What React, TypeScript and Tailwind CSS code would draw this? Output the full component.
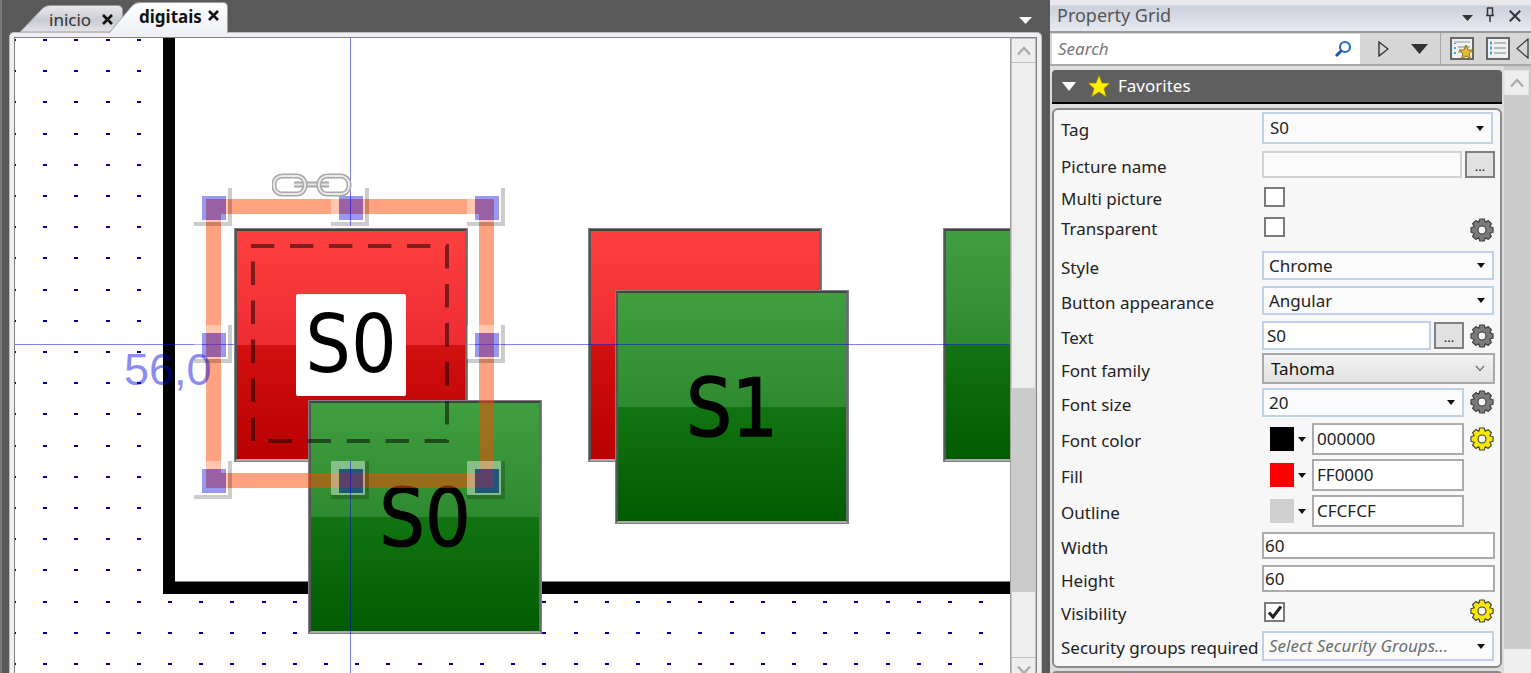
import React from "react";

const UI = "font-['Noto_Sans',sans-serif]";

function gearPath() {
  const teeth = 8;
  const pts: string[] = [];
  for (let i = 0; i < teeth; i++) {
    const a = (i * 2 * Math.PI) / teeth;
    const w = 0.2;
    const g = 0.27;
    const list: [number, number][] = [
      [8.4, a - g - 0.12],
      [11.3, a - w],
      [11.3, a + w],
      [8.4, a + g + 0.12],
    ];
    list.forEach(([r, t]) => {
      pts.push(`${(12 + r * Math.sin(t)).toFixed(2)} ${(12 - r * Math.cos(t)).toFixed(2)}`);
    });
  }
  return "M" + pts.join("L") + "Z";
}

function Gear({ yellow, className = "" }: { yellow?: boolean; className?: string }) {
  return (
    <svg width="24" height="24" viewBox="0 0 24 24" className={className}>
      <path d={gearPath()} fill={yellow ? "#f6e800" : "#7b7b7b"} stroke="#3c3c3c" strokeWidth="1.1" strokeLinejoin="round" />
      <circle cx="12" cy="12" r="4" fill={yellow ? "#f7f7f7" : "#f7f7f7"} stroke="#3c3c3c" strokeWidth="1.1" />
    </svg>
  );
}

function Caret({ className = "" }: { className?: string }) {
  return (
    <svg width="8" height="5" viewBox="0 0 8 5" className={className}>
      <path d="M0 0H8L4 5Z" fill="#111" />
    </svg>
  );
}

function Sel({ text, className = "", italic }: { text: string; className?: string; italic?: boolean }) {
  return (
    <div className={`flex h-full items-center justify-between border-2 border-[#bfd1e6] bg-[#fbfbfb] pr-[7px] ${className}`}>
      <span className={italic ? "pl-[5px] italic text-[#6e6e6e]" : "pl-[5px] text-[#222]"}>{text}</span>
      <Caret />
    </div>
  );
}

function Dots() {
  return (
    <button className="flex h-[27px] w-[30px] shrink-0 items-end justify-center border-2 border-[#808080] bg-[#e1e1e1] pb-[3px] text-[13px] leading-[13px] text-[#222]">
      ...
    </button>
  );
}

function Check({ on }: { on?: boolean }) {
  return (
    <div className="ml-[2px] flex h-[20px] w-[21px] shrink-0 items-center justify-center border-2 border-[#7a7a7a] bg-white">
      {on && (
        <svg width="16" height="14" viewBox="0 0 16 14">
          <path d="M2 7.5L6 12L14 1.5" fill="none" stroke="#222" strokeWidth="3" />
        </svg>
      )}
    </div>
  );
}

function Field({ text, className = "" }: { text: string; className?: string }) {
  return <div className={`flex items-center bg-white text-[#222] ${className}`}>{text}</div>;
}

function Row({ label, className, children }: { label: string; className: string; children?: React.ReactNode }) {
  return (
    <div className={`flex shrink-0 items-center ${className}`}>
      <span className="w-[205px] shrink-0 whitespace-nowrap pl-[4px] pt-[4px] text-[#222]">{label}</span>
      {children}
    </div>
  );
}

function ColorRow({ swatch, value }: { swatch: string; value: string }) {
  return (
    <div className="flex h-full w-[202px] items-center">
      <div className={`ml-[8px] h-[24px] w-[24px] ${swatch}`} />
      <Caret className="ml-[4px] mr-[6px]" />
      <Field text={value} className="h-full w-[152px] border-2 border-[#ababab] pl-[3px]" />
    </div>
  );
}

function Chevron({ up }: { up?: boolean }) {
  return (
    <svg width="16" height="10" viewBox="0 0 16 10">
      <path d={up ? "M2 8.5L8 2L14 8.5" : "M2 1.5L8 8L14 1.5"} fill="none" stroke="#ababab" strokeWidth="2.4" />
    </svg>
  );
}

function CanvasButton({ className, red, children }: { className: string; red?: boolean; children?: React.ReactNode }) {
  return (
    <div className={`absolute h-[234px] w-[234px] border border-[#808080] ${className}`}>
      <div
        className={`flex h-full w-full items-center justify-center border-2 border-t-[#444444] border-r-[#6b6b6b] border-b-[#ababab] border-l-[#555555] ${
          red
            ? "bg-[linear-gradient(#ff4040_0%,#ec2c31_50%,#d21010_50%,#b80000_100%)]"
            : "bg-[linear-gradient(#409f40_0%,#2e8a30_50%,#127412_50%,#005c00_100%)]"
        }`}
      >
        {children}
      </div>
    </div>
  );
}

const BTN_TEXT = "font-['DejaVu_Sans_Condensed','DejaVu_Sans',sans-serif] text-[80px] leading-none text-black";

function Handle({ className }: { className: string }) {
  return (
    <div className={`absolute h-[38px] w-[38px] border-r-4 border-b-4 border-black/20 ${className}`}>
      <div className="h-[34px] w-[34px] border-t-8 border-r-2 border-b-2 border-l-8 border-white/40">
        <div className="h-[24px] w-[24px] bg-[#0000dd]/40" />
      </div>
    </div>
  );
}

function DotGrid() {
  const xs = Array.from({ length: 33 }, (_, i) => Math.round(-1 + 31.2 * i));
  const ys = Array.from({ length: 21 }, (_, i) => Math.round(1 + 31.2 * i));
  return (
    <svg width="995" height="635" className="absolute left-0 top-0" shapeRendering="crispEdges">
      {ys.map((y) => xs.map((x) => <rect key={`${x}-${y}`} x={x - 2} y={y} width="4" height="2" fill="#00009c" />))}
    </svg>
  );
}

function Canvas() {
  return (
    <div className="relative h-full w-[995px] shrink-0 overflow-hidden bg-white">
      <DotGrid />
      <div className="absolute left-[148px] top-0 h-[556px] w-[847px] border-b-[12px] border-l-[12px] border-black bg-white shadow-[inset_0_-1px_0_#808080]" />

      <CanvasButton red className="left-[573px] top-[190px]" />
      <CanvasButton className="left-[928px] top-[190px]" />
      <CanvasButton className="left-[600px] top-[252px]">
        <span className={`${BTN_TEXT} mt-[4px] [-webkit-text-stroke:1.5px_black]`}>S1</span>
      </CanvasButton>

      <div className="absolute left-0 top-[306px] h-px w-[220px] bg-[#0000dd]/50" />
      <div className="absolute left-[452px] top-[306px] h-px w-[543px] bg-[#0000dd]/50" />

      <CanvasButton red className="left-[219px] top-[190px]">
        <div className="flex h-[102px] w-[110px] items-center justify-center rounded-[2px] bg-white">
          <span className={BTN_TEXT}>S0</span>
        </div>
      </CanvasButton>
      <CanvasButton className="left-[293px] top-[362px]">
        <span className={`${BTN_TEXT} mt-[4px] [-webkit-text-stroke:1px_black]`}>S0</span>
      </CanvasButton>

      <svg width="220" height="220" className="absolute left-[228px] top-[200px]">
        <path
          d="M8 8H204V203H10V8"
          fill="none"
          stroke="#000"
          strokeOpacity="0.5"
          strokeWidth="4"
          strokeDasharray="23.4 15.6"
        />
      </svg>

      <div className="absolute left-[191px] top-[161px] h-[289px] w-[288px] border-[15px] border-[#ff4500]/50" />

      <Handle className="left-[179px] top-[150px]" />
      <Handle className="left-[316px] top-[150px]" />
      <Handle className="left-[452px] top-[150px]" />
      <Handle className="left-[179px] top-[287px]" />
      <Handle className="left-[452px] top-[287px]" />
      <Handle className="left-[179px] top-[423px]" />
      <Handle className="left-[316px] top-[423px]" />
      <Handle className="left-[452px] top-[423px]" />

      <div className="absolute left-[335px] top-0 h-[188px] w-px bg-[#0000dd]/50" />
      <div className="absolute left-[335px] top-[423px] h-[212px] w-px bg-[#0000dd]/50" />

      <svg width="80" height="26" viewBox="0 0 80 26" className="absolute left-[257px] top-[135px]">
        <g fill="none" strokeLinejoin="round">
          <path d="M22 11.5H57" stroke="#a8a8a8" strokeWidth="6" />
          <path d="M22 11.5H57" stroke="#e6e6e6" strokeWidth="2" />
          <rect x="2" y="3" width="31" height="18" rx="8" stroke="#a8a8a8" strokeWidth="5" />
          <rect x="2" y="3" width="31" height="18" rx="8" stroke="#ebebeb" strokeWidth="2" />
          <rect x="47" y="3" width="30" height="18" rx="8" stroke="#a8a8a8" strokeWidth="5" />
          <rect x="47" y="3" width="30" height="18" rx="8" stroke="#ebebeb" strokeWidth="2" />
        </g>
      </svg>

      <span className="absolute left-[109px] top-[309px] font-['Liberation_Sans',sans-serif] text-[45px] leading-none text-[#0000dd]/45">
        56,0
      </span>
    </div>
  );
}

function DocScrollbar() {
  return (
    <div className="flex h-full w-[26px] shrink-0 flex-col border-l border-[#a0a0a0] bg-[#eeeeee]">
      <div className="ml-[0px] flex h-[25px] w-[25px] shrink-0 items-center justify-center border border-[#bdbdbd] bg-[#eeeeee]">
        <Chevron up />
      </div>
      <div className="h-[325px] w-[25px] shrink-0 border-x border-[#c4c4c4]" />
      <div className="h-[204px] w-[25px] shrink-0 bg-[#cbcbcb]" />
      <div className="h-[65px] w-[25px] shrink-0 border-x border-[#c4c4c4]" />
      <div className="flex h-[25px] w-[25px] shrink-0 items-center justify-center border border-[#bdbdbd] bg-[#eeeeee]">
        <Chevron />
      </div>
    </div>
  );
}

function CloseX({ className = "" }: { className?: string }) {
  return (
    <svg width="11" height="11" viewBox="0 0 11 11" className={className}>
      <path d="M1 1L10 10M10 1L1 10" stroke="#111" strokeWidth="2.6" />
    </svg>
  );
}

function Tabs() {
  return (
    <div className="relative flex h-[32px] shrink-0 items-end pl-[18px]">
      <div className="relative h-[27px] w-[103px] shrink-0">
        <svg width="103" height="27" viewBox="0 0 103 27" className="absolute inset-0">
          <defs>
            <linearGradient id="tabA" x1="0" y1="0" x2="0" y2="1">
              <stop offset="0" stopColor="#e9e9ec" />
              <stop offset="0.55" stopColor="#c9cbd2" />
              <stop offset="1" stopColor="#e4e5ea" />
            </linearGradient>
          </defs>
          <path d="M0 27L23 3Q26 .5 30 .5H97Q102.500 .5 102.500 5V15L91 27Z" fill="url(#tabA)" stroke="#9a9a9a" />
        </svg>
        <div className={`relative flex h-full items-center pl-[29px] pt-[2px] text-[17px] text-[#333] ${UI}`}>
          inicio
          <CloseX className="ml-[11px]" />
        </div>
      </div>
      <div className="relative z-10 -ml-[14px] -mb-px h-[32px] w-[120px] shrink-0">
        <svg width="120" height="32" viewBox="0 0 120 32" className="absolute inset-0">
          <defs>
            <linearGradient id="tabB" x1="0" y1="0" x2="0" y2="1">
              <stop offset="0" stopColor="#ffffff" />
              <stop offset="1" stopColor="#eff0f5" />
            </linearGradient>
          </defs>
          <path d="M0 32L23 5Q26 1.500 31 1.500H114Q118.500 1.500 118.500 6V32Z" fill="url(#tabB)" />
          <path d="M0 32L23 5Q26 1.500 31 1.500H114Q118.500 1.500 118.500 6V32" fill="none" stroke="#9f9f9f" />
        </svg>
        <div className={`relative flex h-full items-center pb-[1px] pl-[30px] text-[17px] font-bold text-[#111] ${UI}`}>
          digitais
          <CloseX className="mb-[3px] ml-[6px]" />
        </div>
      </div>
      <svg width="13" height="7" viewBox="0 0 13 7" className="mb-[8px] ml-auto mr-[18px]">
        <path d="M0 0H13L6.500 7Z" fill="#fff" />
      </svg>
    </div>
  );
}

function TitleBar() {
  return (
    <div className="flex h-[33px] shrink-0 items-center border-b-2 border-[#9a9a9a] bg-[linear-gradient(#e9e9eb_0%,#e6e6e9_15%,#ccd0dc_20%,#e6e9f1_100%)] pl-[7px] pr-[10px]">
      <span className={`text-[18px] text-[#555] ${UI}`}>Property Grid</span>
      <svg width="11" height="6" viewBox="0 0 11 6" className="ml-auto mt-[4px]">
        <path d="M0 0H11L5.500 6Z" fill="#333" />
      </svg>
      <svg width="10" height="15" viewBox="0 0 10 15" className="ml-[12px] mb-[2px]">
        <path d="M1 8.500H9M2.500 8V1H7.500V8M5 9V15M2.500 1H7.500" fill="none" stroke="#333" strokeWidth="1.500" />
      </svg>
      <svg width="12" height="12" viewBox="0 0 12 12" className="ml-[14px]">
        <path d="M.8 .8L11.200 11.200M11.200 .8L.8 11.200" stroke="#333" strokeWidth="2" />
      </svg>
    </div>
  );
}

function Toolbar() {
  return (
    <div className="flex h-[33px] shrink-0 items-center border-b-2 border-[#a8a8a8] bg-[#d6d6d6] pl-[2px]">
      <div className="flex h-[30px] w-[308px] shrink-0 items-center justify-between bg-white pl-[6px] pr-[8px]">
        <span className={`text-[17px] italic text-[#777] ${UI}`}>Search</span>
        <svg width="18" height="18" viewBox="0 0 18 18">
          <circle cx="11" cy="7" r="5" fill="none" stroke="#2a6fc0" strokeWidth="2.200" />
          <path d="M7.500 10.500L2 16" stroke="#1f5aa8" strokeWidth="3" />
        </svg>
      </div>
      <svg width="11" height="16" viewBox="0 0 11 16" className="ml-[18px]">
        <path d="M1 1L10 8L1 15Z" fill="none" stroke="#333" strokeWidth="1.400" />
      </svg>
      <svg width="17" height="10" viewBox="0 0 17 10" className="ml-[22px]">
        <path d="M0 0H17L8.500 10Z" fill="#333" />
      </svg>
      <div className="ml-[12px] h-full w-px bg-[#a8a8a8]" />
      <svg width="24" height="24" viewBox="0 0 24 24" className="ml-[9px]">
        <rect x="1" y="1" width="22" height="21" fill="#eef0f2" stroke="#666" strokeWidth="2" />
        <path d="M4 5H20" stroke="#c4c4c4" strokeWidth="2" />
        <path d="M4 6V7H6V6ZM4 10V12H6V10ZM4 15V17H6V15Z" fill="#3fa6e8" />
        <path d="M8 10H20M8 15H12" stroke="#bbb" strokeWidth="2" />
        <path d="M16 8L18.200 13H23L19.200 16.500L20.500 22L16 19L11.500 22L12.800 16.500L9 13H13.800Z" fill="#e2bc2f" stroke="#8a6f22" />
      </svg>
      <svg width="24" height="24" viewBox="0 0 24 24" className="ml-[12px]">
        <rect x="1" y="1" width="22" height="21" fill="#eef0f2" stroke="#666" strokeWidth="2" />
        <path d="M4 6H6M4 11H6M4 16H6" stroke="#3fa6e8" strokeWidth="3" />
        <path d="M8 6H20M8 11H20M8 16H20" stroke="#bbb" strokeWidth="2" />
      </svg>
      <svg width="13" height="21" viewBox="0 0 13 21" className="ml-[6px]">
        <path d="M12 1L1 10.500L12 20Z" fill="none" stroke="#333" strokeWidth="1.200" />
      </svg>
    </div>
  );
}

function Favorites() {
  return (
    <div className={`flex h-full w-[454px] shrink-0 flex-col pl-[2px] pr-[2px] pt-[4px] text-[17px] ${UI}`}>
      <div className="flex h-[34px] shrink-0 items-center rounded-t-[4px] border-b-2 border-black bg-[#5f5f5f] pl-[10px] text-white">
        <svg width="14" height="9" viewBox="0 0 14 9">
          <path d="M0 0H14L7 9Z" fill="#fff" />
        </svg>
        <svg width="24" height="24" viewBox="0 0 24 24" className="ml-[11px]">
          <path d="M12 1L15 9H23L17 14.500L19.500 23L12 18L4.500 23L7 14.500L1 9H9Z" fill="#ffee00" stroke="#8c7d10" strokeWidth=".8" />
        </svg>
        <span className="ml-[7px]">Favorites</span>
      </div>
      <div className="mt-[4px] flex h-[560px] shrink-0 flex-col rounded-[6px] border-2 border-[#8a8a8a] bg-[#f7f7f7] pl-[3px] pr-[5px]">
        <Row label="Tag" className="mt-[2px] h-[32px]">
          <Sel text="S0" className="w-[231px] [&>span]:pl-[6px]" />
        </Row>
        <Row label="Picture name" className="mt-[7px] h-[27px]">
          <div className="h-full w-[202px] border-2 border-[#d2d2d2] bg-[#fafafa]" />
          <div className="ml-[3px]">
            <Dots />
          </div>
        </Row>
        <Row label="Multi picture" className="mt-[9px] h-[20px]">
          <Check />
        </Row>
        <Row label="Transparent" className="mt-[10px] h-[20px]">
          <Check />
          <Gear className="ml-[185px] mt-[6px]" />
        </Row>
        <Row label="Style" className="mt-[14px] h-[29px]">
          <Sel text="Chrome" className="w-[232px]" />
        </Row>
        <Row label="Button appearance" className="mt-[6px] h-[29px]">
          <Sel text="Angular" className="w-[232px]" />
        </Row>
        <Row label="Text" className="mt-[6px] h-[29px]">
          <Field text="S0" className="h-full w-[169px] border-2 border-[#bfd1e6] pl-[3px]" />
          <div className="ml-[3px]">
            <Dots />
          </div>
          <Gear className="ml-[6px]" />
        </Row>
        <Row label="Font family" className="mt-[3px] h-[31px]">
          <div className="flex h-full w-[235px] items-center justify-between border-2 border-[#a9a9a9] bg-[linear-gradient(#f3f3f3,#e1e1e1)] pl-[7px] pr-[8px] text-[#111]">
            <span>Tahoma</span>
            <svg width="10" height="7" viewBox="0 0 10 7">
              <path d="M1 1L5 5.500L9 1" fill="none" stroke="#777" strokeWidth="1.400" />
            </svg>
          </div>
        </Row>
        <Row label="Font size" className="mt-[4px] h-[29px]">
          <Sel text="20" className="w-[202px]" />
          <Gear className="ml-[6px] -mt-[2px]" />
        </Row>
        <Row label="Font color" className="mt-[6px] h-[32px]">
          <ColorRow swatch="bg-black" value="000000" />
          <Gear yellow className="ml-[6px]" />
        </Row>
        <Row label="Fill" className="mt-[4px] h-[32px]">
          <ColorRow swatch="bg-[#ff0000]" value="FF0000" />
        </Row>
        <Row label="Outline" className="mt-[4px] h-[32px]">
          <ColorRow swatch="bg-[#cfcfcf]" value="CFCFCF" />
        </Row>
        <Row label="Width" className="mt-[5px] h-[27px]">
          <Field text="60" className="h-full w-[235px] border-2 border-[#ababab] pl-[1px]" />
        </Row>
        <Row label="Height" className="mt-[6px] h-[27px]">
          <Field text="60" className="h-full w-[235px] border-2 border-[#ababab] pl-[1px]" />
        </Row>
        <Row label="Visibility" className="mt-[10px] h-[20px]">
          <Check on />
          <Gear yellow className="ml-[185px] -mt-[2px]" />
        </Row>
        <Row label="Security groups required" className="mt-[9px] h-[30px]">
          <Sel text="Select Security Groups..." italic className="w-[232px]" />
        </Row>
      </div>
      <div className="mt-[3px] h-[4px] shrink-0 rounded-t-[4px] border-2 border-b-0 border-[#8a8a8a] bg-[#f7f7f7]" />
    </div>
  );
}

function PanelScrollbar() {
  return (
    <div className="flex h-full w-[27px] shrink-0 flex-col bg-[#cccccc] pt-[4px]">
      <div className="flex h-[25px] w-[25px] shrink-0 items-center justify-center border border-[#e4e4e4] bg-[#eeeeee]">
        <Chevron up />
      </div>
      <div className="h-[554px] shrink-0 bg-[#cccccc]" />
      <div className="flex-1 bg-[#eeeeee]" />
    </div>
  );
}

export default function App() {
  return (
    <div className="flex h-[673px] w-[1531px] overflow-hidden bg-[#595959]">
      <div className="flex h-full w-[1050px] shrink-0 flex-col border-l-2 border-[#777777]">
        <Tabs />
        <div className="ml-[7px] w-[1033px] flex-1 rounded-t-[5px] border border-b-0 border-[#bdbdbd] bg-[#eff0f5] px-[4px] pt-[4px]">
          <div className="flex h-full border border-b-0 border-[#808080]">
            <Canvas />
            <DocScrollbar />
          </div>
        </div>
      </div>
      <div className="flex h-full w-[481px] shrink-0 flex-col bg-[#dcdcdc]">
        <TitleBar />
        <Toolbar />
        <div className="flex min-h-0 flex-1 bg-[#dddddd]">
          <Favorites />
          <PanelScrollbar />
        </div>
      </div>
    </div>
  );
}
